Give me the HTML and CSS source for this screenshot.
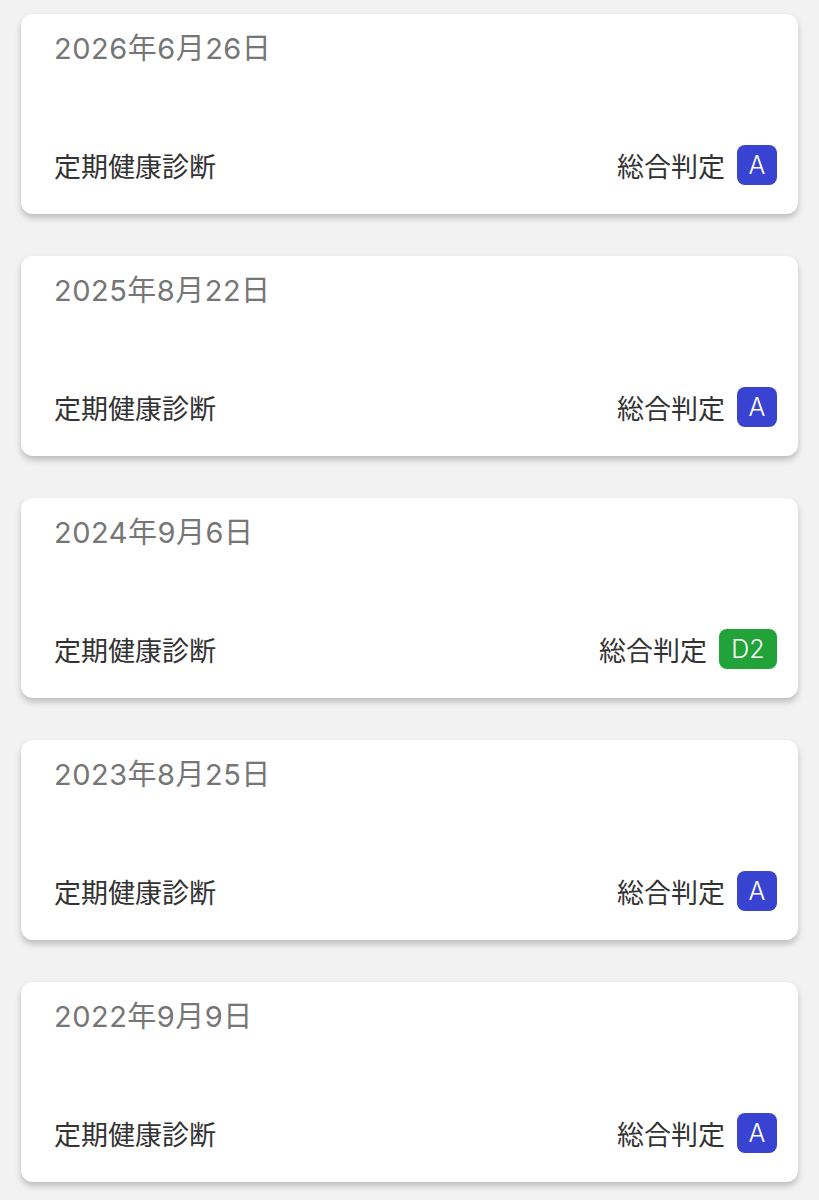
FILE: index.html
```html
<!DOCTYPE html>
<html lang="ja">
<head>
  <meta charset="UTF-8">
  <meta name="viewport" content="width=device-width, initial-scale=1.0">
  <title>健康診断履歴</title>
  <link rel="stylesheet" href="styles.css">
</head>
<body>
  <div class="list">
    <div class="card">
      <div class="date">2026年6月26日</div>
      <div class="row">
        <span class="kind">定期健康診断</span>
        <span class="result">総合判定 <span class="badge blue">A</span></span>
      </div>
    </div>
    <div class="card">
      <div class="date">2025年8月22日</div>
      <div class="row">
        <span class="kind">定期健康診断</span>
        <span class="result">総合判定 <span class="badge blue">A</span></span>
      </div>
    </div>
    <div class="card">
      <div class="date">2024年9月6日</div>
      <div class="row">
        <span class="kind">定期健康診断</span>
        <span class="result">総合判定 <span class="badge green wide">D2</span></span>
      </div>
    </div>
    <div class="card">
      <div class="date">2023年8月25日</div>
      <div class="row">
        <span class="kind">定期健康診断</span>
        <span class="result">総合判定 <span class="badge blue">A</span></span>
      </div>
    </div>
    <div class="card">
      <div class="date">2022年9月9日</div>
      <div class="row">
        <span class="kind">定期健康診断</span>
        <span class="result">総合判定 <span class="badge blue">A</span></span>
      </div>
    </div>
  </div>
</body>
</html>
```
FILE: styles.css
```css
body { margin: 0; padding: 14px 21px; background: #f2f2f2; font-family: Inter, "Noto Sans CJK JP", sans-serif; }
.list { display: flex; flex-direction: column; gap: 42px; }
.card { height: 200px; box-sizing: border-box; background: #fff; border-radius: 12px; padding: 18px 21px 29px 33px; display: flex; flex-direction: column; box-shadow: 0 4px 6px rgba(0, 0, 0, 0.22); }
.date { font-size: 29px; line-height: 34px; letter-spacing: 0.5px; color: #767676; }
.row { margin-top: auto; display: flex; justify-content: space-between; align-items: center; height: 40px; }
.kind, .result { font-size: 27px; color: #333; }
.result { display: flex; align-items: center; gap: 12px; }
.badge { height: 40px; width: 40px; box-sizing: border-box; border-radius: 8px; color: #fff; font-size: 25px; font-weight: 300; display: flex; align-items: center; justify-content: center; }
.badge.wide { width: 58px; }
.blue { background: #3843d1; }
.green { background: #22a33a; }
```
